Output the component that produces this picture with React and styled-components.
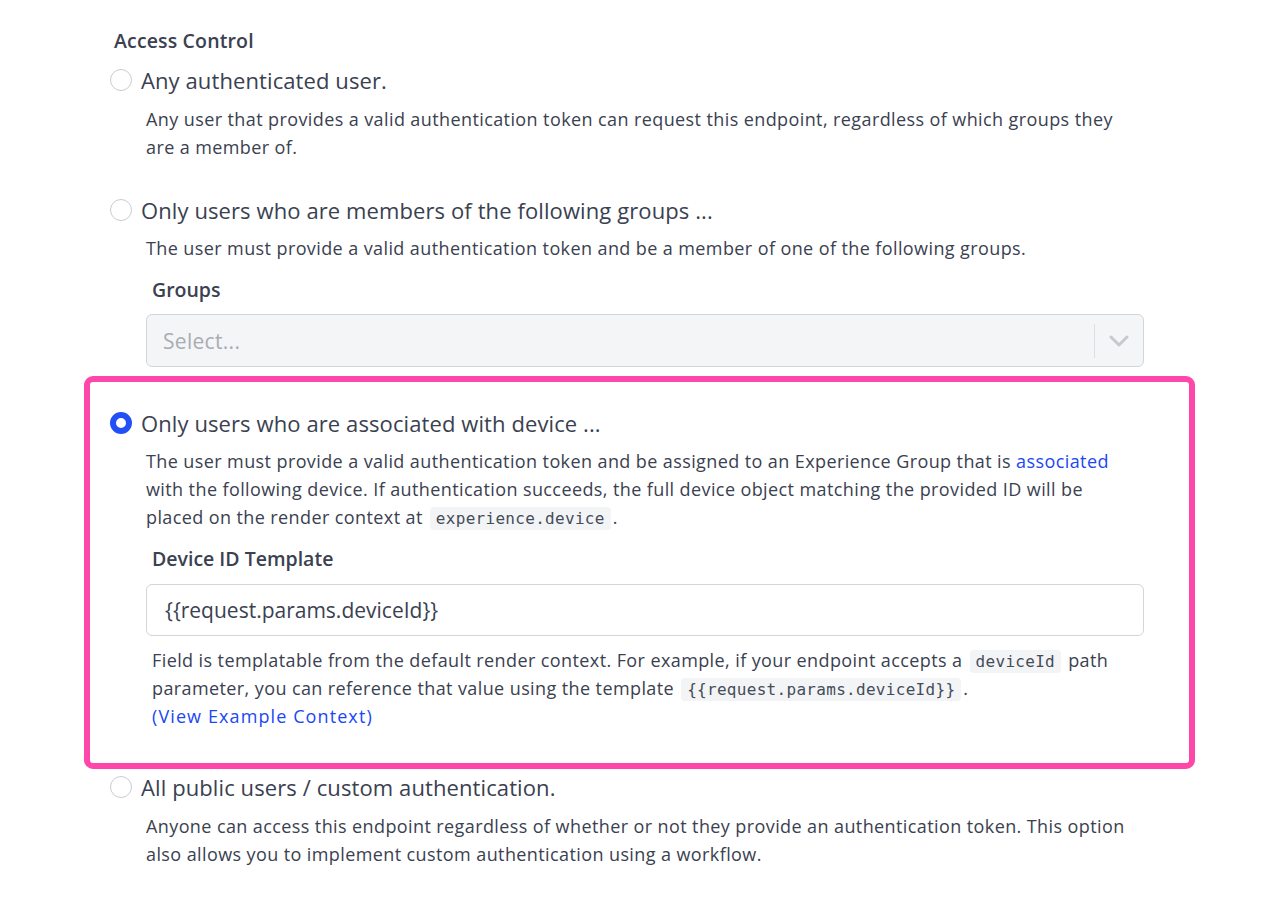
import React from "react";
import styled, { createGlobalStyle } from "styled-components";

const Global = createGlobalStyle`
  html, body { margin: 0; padding: 0; background: #ffffff; }
  body {
    font-family: "Open Sans", "Noto Sans", sans-serif;
    color: #3a4150;
    -webkit-font-smoothing: antialiased;
  }
  * { box-sizing: border-box; }
`;

const Page = styled.div`
  width: 1280px;
  min-height: 912px;
  padding: 28px 0 0 110px;
`;

const Column = styled.div`
  width: 1034px;
  display: flex;
  flex-direction: column;
`;

const Heading = styled.div`
  font-size: 19.5px;
  font-weight: 600;
  line-height: 26px;
  letter-spacing: 0.15px;
  padding-left: 4px;
  color: #3a4150;
`;

const Option = styled.div`
  display: flex;
  flex-direction: column;
  margin-top: ${(p) => p.$mt || 0}px;
`;

const OptionRow = styled.label`
  display: flex;
  align-items: center;
  gap: 9px;
  height: 30px;
  cursor: pointer;
`;

const Radio = styled.span`
  width: 22px;
  height: 22px;
  border-radius: 50%;
  flex: none;
  border: ${(p) => (p.$checked ? "6.5px solid #2350f6" : "1.5px solid #c9ccd1")};
  background: #ffffff;
`;

const OptionLabel = styled.span`
  font-size: 22px;
  line-height: 30px;
  letter-spacing: 0.1px;
  color: #3a4150;
`;

const Body = styled.div`
  padding-left: 36px;
  display: flex;
  flex-direction: column;
`;

const Desc = styled.p`
  margin: ${(p) => p.$mt || 10}px 0 0;
  font-size: 18px;
  letter-spacing: 0.4px;
  line-height: 28px;
  color: #3a4150;
`;

const Link = styled.a`
  color: #1b47f5;
  text-decoration: none;
  letter-spacing: ${(p) => p.$ls || "inherit"};
`;

const Code = styled.code`
  font-family: "DejaVu Sans Mono", "Liberation Mono", monospace;
  font-size: 16px;
  line-height: 1;
  letter-spacing: 0.3px;
  background: #f3f4f6;
  color: #454c59;
  border-radius: 4px;
  padding: 2px 6px;
  margin: 0 2px;
`;

const FieldLabel = styled.div`
  margin-top: ${(p) => p.$mt || 16}px;
  padding-left: 6px;
  font-size: 19.5px;
  font-weight: 600;
  line-height: 24px;
  color: #3a4150;
`;

const SelectBox = styled.div`
  margin-top: 12px;
  height: 53px;
  border: 1.5px solid #d2d5da;
  border-radius: 6px;
  background: #f4f5f7;
  display: flex;
  align-items: center;
`;

const Placeholder = styled.span`
  flex: 1;
  padding-left: 16px;
  font-size: 21px;
  letter-spacing: 0.3px;
  color: #a8acb3;
`;

const Divider = styled.span`
  width: 1.5px;
  height: 34px;
  background: #dcdee2;
`;

const Chevron = styled.span`
  width: 48px;
  display: flex;
  justify-content: center;
  align-items: center;
`;

const Highlight = styled.div`
  margin: 9px -51px 0 -26px;
  border: 6px solid #ff46a9;
  border-radius: 9px;
  padding: 26px 45px 33px 20px;
`;

const Input = styled.div`
  margin-top: 13px;
  height: 52px;
  border: 1.5px solid #d2d5da;
  border-radius: 6px;
  background: #ffffff;
  display: flex;
  align-items: center;
  padding-left: 18px;
  font-size: 21px;
  color: #3a4150;
`;

const Help = styled.div`
  margin-top: 10px;
  padding-left: 6px;
  font-size: 18px;
  letter-spacing: 0.4px;
  line-height: 28px;
  color: #3a4150;
`;

export default function App() {
  return (
    <>
      <Global />
      <Page>
        <Column>
          <Heading>Access Control</Heading>

          <Option $mt={11}>
            <OptionRow>
              <Radio />
              <OptionLabel>Any authenticated user.</OptionLabel>
            </OptionRow>
            <Body>
              <Desc>
                Any user that provides a valid authentication token can request this endpoint,
                regardless of which groups they are a member of.
              </Desc>
            </Body>
          </Option>

          <Option $mt={34}>
            <OptionRow>
              <Radio />
              <OptionLabel>Only users who are members of the following groups ...</OptionLabel>
            </OptionRow>
            <Body>
              <Desc $mt={9}>
                The user must provide a valid authentication token and be a member of one of the
                following groups.
              </Desc>
              <FieldLabel $mt={16}>Groups</FieldLabel>
              <SelectBox>
                <Placeholder>Select...</Placeholder>
                <Divider />
                <Chevron>
                  <svg width="20" height="12" viewBox="0 0 20 12" fill="none">
                    <path d="M2 2l8 8 8-8" stroke="#c7c9cd" strokeWidth="3" strokeLinecap="round" strokeLinejoin="round" />
                  </svg>
                </Chevron>
              </SelectBox>
            </Body>
          </Option>

          <Highlight>
            <Option>
              <OptionRow>
                <Radio $checked />
                <OptionLabel>Only users who are associated with device ...</OptionLabel>
              </OptionRow>
              <Body>
                <Desc $mt={9}>
                  The user must provide a valid authentication token and be assigned to an
                  Experience Group that is <Link href="#">associated</Link> with the following
                  device. If authentication succeeds, the full device object matching the provided
                  ID will be placed on the render context at <Code>experience.device</Code>.
                </Desc>
                <FieldLabel $mt={16}>Device ID Template</FieldLabel>
                <Input>{"{{request.params.deviceId}}"}</Input>
                <Help>
                  Field is templatable from the default render context. For example, if your
                  endpoint accepts a <Code>deviceId</Code> path parameter, you can reference that
                  value using the template <Code>{"{{request.params.deviceId}}"}</Code>.
                  <br />
                  <Link href="#" $ls="1.1px">(View Example Context)</Link>
                </Help>
              </Body>
            </Option>
          </Highlight>

          <Option $mt={3}>
            <OptionRow>
              <Radio />
              <OptionLabel>All public users / custom authentication.</OptionLabel>
            </OptionRow>
            <Body>
              <Desc>
                Anyone can access this endpoint regardless of whether or not they provide an
                authentication token. This option also allows you to implement custom
                authentication using a workflow.
              </Desc>
            </Body>
          </Option>
        </Column>
      </Page>
    </>
  );
}
